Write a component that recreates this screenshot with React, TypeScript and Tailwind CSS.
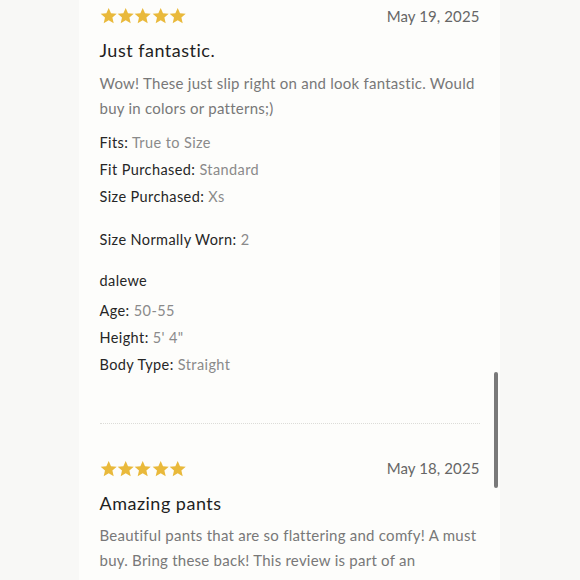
import React from 'react'

const font = { fontFamily: 'Lato, "Noto Sans", sans-serif' }

function Stars() {
  return (
    <div className="flex">
      {[0, 1, 2, 3, 4].map((i) => (
        <svg key={i} viewBox="0 0 24 24" className="w-[17.4px] h-[18px]">
          <path
            d="M12 1l3.2 7.3 7.9.7-6 5.2 1.8 7.8L12 18l-6.9 4 1.8-7.8-6-5.2 7.9-.7z"
            fill="#e9b93b"
          />
        </svg>
      ))}
    </div>
  )
}

function Row({ label, value }: { label: string; value: string }) {
  return (
    <p className="leading-[27px] text-[14.5px] tracking-[0.4px]">
      <span className="text-[#262626]">{label}:</span>{' '}
      <span className="text-[#8a8a8a]">{value}</span>
    </p>
  )
}

export default function App() {
  return (
    <div className="w-[580px] h-[580px] overflow-hidden bg-[#f8f8f6] flex justify-center" style={font}>
      <div className="relative w-[421px] ml-[-2px] bg-[#fdfdfb] pl-[21px] pr-[20px]">
        {/* Review 1 */}
        <div className="flex items-center justify-between h-[24px] mt-[4px]">
          <Stars />
          <span className="text-[15px] text-[#666666] tracking-[0.1px]">May 19, 2025</span>
        </div>
        <h3 className="mt-[10px] text-[18px] leading-[24px] text-[#1f1f1f] tracking-[0.5px]">Just fantastic.</h3>
        <p className="mt-[8.5px] text-[15px] leading-[25px] text-[#787878] tracking-[0.25px]">
          Wow! These just slip right on and look fantastic. Would buy in colors or patterns;)
        </p>
        <div className="mt-[8px]">
          <Row label="Fits" value="True to Size" />
          <Row label="Fit Purchased" value="Standard" />
          <Row label="Size Purchased" value="Xs" />
        </div>
        <div className="mt-[16px]">
          <Row label="Size Normally Worn" value="2" />
        </div>
        <p className="mt-[14px] leading-[27px] text-[14.5px] text-[#262626] tracking-[0.4px]">dalewe</p>
        <div className="mt-[3px]">
          <Row label="Age" value="50-55" />
          <Row label="Height" value={'5\' 4"'} />
          <Row label="Body Type" value="Straight" />
        </div>
        <div className="mt-[45px] border-t border-dotted border-[#dcdcd8]" />

        {/* Review 2 */}
        <div className="flex items-center justify-between h-[24px] mt-[33px]">
          <Stars />
          <span className="text-[15px] text-[#666666] tracking-[0.1px]">May 18, 2025</span>
        </div>
        <h3 className="mt-[10px] text-[18px] leading-[24px] text-[#1f1f1f] tracking-[0.5px]">Amazing pants</h3>
        <p className="mt-[8.5px] text-[15px] leading-[25px] text-[#787878] tracking-[0.25px]">
          Beautiful pants that are so flattering and comfy! A must buy. Bring these back! This review is part of an incentive campaign.
        </p>

        {/* scrollbar */}
        <div className="absolute left-[415px] top-[372px] w-[4px] h-[116px] rounded-full bg-[#7a7a7a]" />
      </div>
    </div>
  )
}
